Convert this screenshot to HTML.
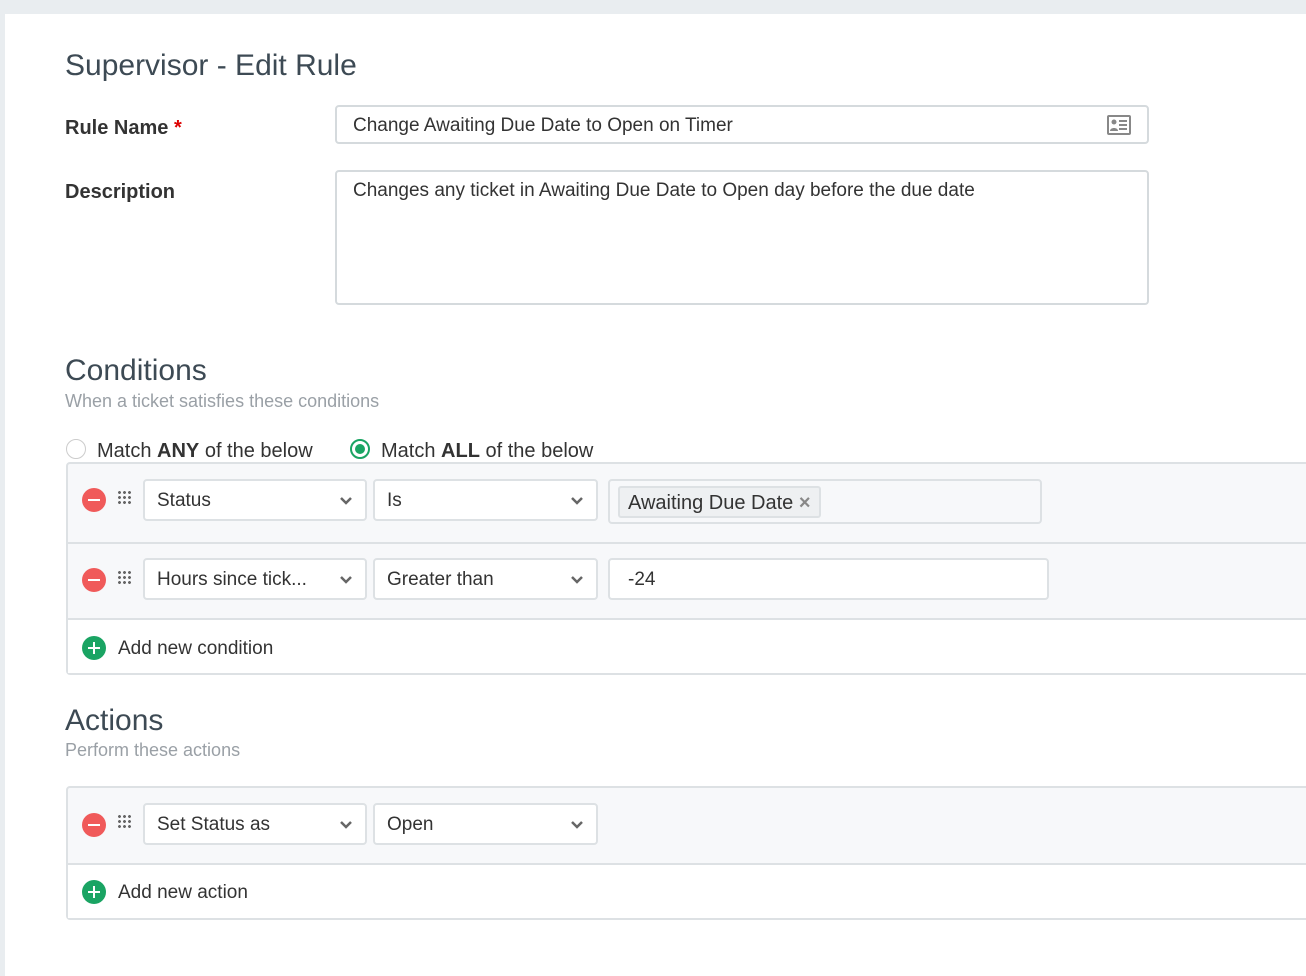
<!DOCTYPE html>
<html><head><style>
*{box-sizing:border-box;margin:0;padding:0}
body{width:1306px;height:976px;background:#e9edf0;font-family:"Liberation Sans",sans-serif;color:#333;position:relative;overflow:hidden}
.card{position:absolute;left:5px;top:14px;width:1301px;height:962px;background:#fff}
.a{position:absolute;white-space:nowrap}
.h{font-size:30px;font-weight:300;color:#3d4a54}
.lbl{font-size:20px;font-weight:bold;color:#333}
.sub{font-size:18px;color:#9aa0a6}
.inp{position:absolute;border:2px solid #d5dadd;border-radius:4px;background:#fff;font-size:19px;color:#333;padding-left:16px}
.box{position:absolute;left:66px;width:1250px;border:2px solid #dde1e4;border-radius:4px;background:#f7f8fa}
.sel{position:absolute;height:42px;border:2px solid #dde1e4;border-radius:4px;background:#fff;font-size:19px;color:#333;padding-left:12px;line-height:40px}
.sel svg{position:absolute;right:12px;top:15px}
.rm{position:absolute;width:24px;height:24px;border-radius:50%;background:#f05a5a}
.rm:after{content:"";position:absolute;left:6px;top:11px;width:12px;height:2px;background:#fff}
.add{position:absolute;width:24px;height:24px;border-radius:50%;background:#1aa463}
.add:before{content:"";position:absolute;left:6px;top:11px;width:12px;height:2px;background:#fff}
.add:after{content:"";position:absolute;left:11px;top:6px;width:2px;height:12px;background:#fff}
.grip{position:absolute;width:15px;height:15px;background-image:radial-gradient(circle,#666 1.3px,transparent 1.6px);background-size:5px 5px}
.txt{font-size:19px;color:#333}
</style></head><body>
<div class="card"></div>
<div class="a h" style="left:65px;top:49px">Supervisor - Edit Rule</div>
<div class="a lbl" style="left:65px;top:117px">Rule Name <span style="color:#d00">*</span></div>
<div class="inp" style="left:335px;top:105px;width:814px;height:39px;line-height:37px">Change Awaiting Due Date to Open on Timer
<svg style="position:absolute;right:16px;top:8px" width="24" height="20" viewBox="0 0 24 20"><rect x="0" y="0" width="24" height="20" rx="2" fill="#888"/><rect x="2" y="2" width="20" height="16" fill="#fff"/><circle cx="7" cy="7" r="2.5" fill="#888"/><path d="M3 16c0-4 8-4 8 0z" fill="#888"/><rect x="12" y="5" width="8" height="2" fill="#888"/><rect x="12" y="9" width="8" height="2" fill="#888"/><rect x="12" y="13" width="8" height="2" fill="#888"/></svg></div>
<div class="a lbl" style="left:65px;top:181px">Description</div>
<div class="inp" style="left:335px;top:170px;width:814px;height:135px;padding-top:8px">Changes any ticket in Awaiting Due Date to Open day before the due date</div>

<div class="a h" style="left:65px;top:354px">Conditions</div>
<div class="a sub" style="left:65px;top:391px">When a ticket satisfies these conditions</div>
<div class="a" style="left:66px;top:439px;width:20px;height:20px;border:1.5px solid #ccc;border-radius:50%"></div>
<div class="a txt" style="left:97px;top:440px;font-size:20px">Match <b>ANY</b> of the below</div>
<div class="a" style="left:350px;top:439px;width:20px;height:20px;border:2px solid #1aa463;border-radius:50%"><div style="margin:3px;width:10px;height:10px;border-radius:50%;background:#1aa463"></div></div>
<div class="a txt" style="left:381px;top:440px;font-size:20px">Match <b>ALL</b> of the below</div>

<div class="box" style="top:462px;height:213px"></div>
<div class="a" style="left:68px;top:542px;width:1240px;height:2px;background:#dde1e4"></div>
<div class="a" style="left:68px;top:618px;width:1240px;height:2px;background:#dde1e4"></div>
<div class="rm" style="left:82px;top:488px"></div><div class="grip" style="left:117px;top:490px"></div>
<div class="sel" style="left:143px;top:479px;width:224px">Status<svg width="14" height="10"><path d="M2 2l5 5 5-5" stroke="#666" stroke-width="2.5" fill="none"/></svg></div>
<div class="sel" style="left:373px;top:479px;width:225px">Is<svg width="14" height="10"><path d="M2 2l5 5 5-5" stroke="#666" stroke-width="2.5" fill="none"/></svg></div>
<div class="a" style="left:608px;top:479px;width:434px;height:45px;border:2px solid #dde1e4;border-radius:4px;background:#f7f8fa"><div style="position:absolute;left:8px;top:5px;height:32px;border:2px solid #dde1e4;border-radius:3px;background:#eef0f2;padding:0 8px;font-size:20px;line-height:30px">Awaiting Due Date <span style="color:#888;font-weight:bold">×</span></div></div>
<div class="rm" style="left:82px;top:568px"></div><div class="grip" style="left:117px;top:570px"></div>
<div class="sel" style="left:143px;top:558px;width:224px">Hours since tick...<svg width="14" height="10"><path d="M2 2l5 5 5-5" stroke="#666" stroke-width="2.5" fill="none"/></svg></div>
<div class="sel" style="left:373px;top:558px;width:225px">Greater than<svg width="14" height="10"><path d="M2 2l5 5 5-5" stroke="#666" stroke-width="2.5" fill="none"/></svg></div>
<div class="sel" style="left:608px;top:558px;width:441px;padding-left:18px">-24</div>
<div class="a" style="left:68px;top:620px;width:1240px;height:53px;background:#fff"></div>
<div class="add" style="left:82px;top:636px"></div>
<div class="a txt" style="left:118px;top:638px">Add new condition</div>

<div class="a h" style="left:65px;top:704px">Actions</div>
<div class="a sub" style="left:65px;top:740px">Perform these actions</div>
<div class="box" style="top:786px;height:134px"></div>
<div class="a" style="left:68px;top:863px;width:1240px;height:2px;background:#dde1e4"></div>
<div class="a" style="left:68px;top:865px;width:1240px;height:53px;background:#fff"></div>
<div class="rm" style="left:82px;top:813px"></div><div class="grip" style="left:117px;top:814px"></div>
<div class="sel" style="left:143px;top:803px;width:224px">Set Status as<svg width="14" height="10"><path d="M2 2l5 5 5-5" stroke="#666" stroke-width="2.5" fill="none"/></svg></div>
<div class="sel" style="left:373px;top:803px;width:225px">Open<svg width="14" height="10"><path d="M2 2l5 5 5-5" stroke="#666" stroke-width="2.5" fill="none"/></svg></div>
<div class="add" style="left:82px;top:880px"></div>
<div class="a txt" style="left:118px;top:882px">Add new action</div>
</body></html>
